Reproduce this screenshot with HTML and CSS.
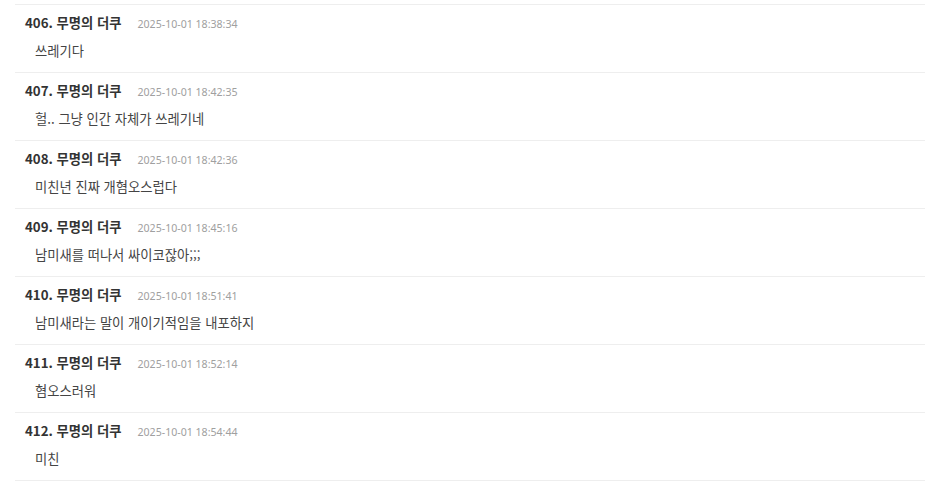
FILE: index.html
```html
<!DOCTYPE html>
<html lang="ko">

<head>
  <meta charset="UTF-8">
  <meta name="viewport" content="width=device-width, initial-scale=1.0">
  <title>댓글</title>
  <link rel="stylesheet" href="styles.css">
</head>

<body>
  <ul class="cmt-list">
    <li class="cmt-item">
      <div class="cmt-head"><span class="cmt-name">406. 무명의 더쿠</span><span class="cmt-date">2025-10-01 18:38:34</span></div>
      <p class="cmt-text">쓰레기다</p>
    </li>
    <li class="cmt-item">
      <div class="cmt-head"><span class="cmt-name">407. 무명의 더쿠</span><span class="cmt-date">2025-10-01 18:42:35</span></div>
      <p class="cmt-text">헐.. 그냥 인간 자체가 쓰레기네</p>
    </li>
    <li class="cmt-item">
      <div class="cmt-head"><span class="cmt-name">408. 무명의 더쿠</span><span class="cmt-date">2025-10-01 18:42:36</span></div>
      <p class="cmt-text">미친년 진짜 개혐오스럽다</p>
    </li>
    <li class="cmt-item">
      <div class="cmt-head"><span class="cmt-name">409. 무명의 더쿠</span><span class="cmt-date">2025-10-01 18:45:16</span></div>
      <p class="cmt-text">남미새를 떠나서 싸이코잖아;;;</p>
    </li>
    <li class="cmt-item">
      <div class="cmt-head"><span class="cmt-name">410. 무명의 더쿠</span><span class="cmt-date">2025-10-01 18:51:41</span></div>
      <p class="cmt-text">남미새라는 말이 개이기적임을 내포하지</p>
    </li>
    <li class="cmt-item">
      <div class="cmt-head"><span class="cmt-name">411. 무명의 더쿠</span><span class="cmt-date">2025-10-01 18:52:14</span></div>
      <p class="cmt-text">혐오스러워</p>
    </li>
    <li class="cmt-item">
      <div class="cmt-head"><span class="cmt-name">412. 무명의 더쿠</span><span class="cmt-date">2025-10-01 18:54:44</span></div>
      <p class="cmt-text">미친</p>
    </li>
  </ul>
</body>

</html>
```

FILE: styles.css
```css
ul,
li,
p,
div,
span {
  padding: 0px;
  margin: 0px;
}

body {
  margin: 0;
  background: #fff;
  font-family: "Noto Sans CJK KR", "Noto Sans", sans-serif;
}

.cmt-list {
  list-style: none;
  padding: 4px 0 0 15px;
}

.cmt-item {
  border-top: 1px solid #eee;
  padding: 7px 10px 11px;
}

.cmt-item:last-child {
  border-bottom: 1px solid #eee;
}

.cmt-head {
  height: 18px;
  line-height: 18px;
}

.cmt-name {
  font-size: 13.3px;
  font-weight: bold;
  color: #333;
}

.cmt-date {
  margin-left: 16px;
  font-family: "Noto Sans", "Noto Sans CJK KR", sans-serif;
  font-size: 10.6px;
  color: #a0a0a0;
}

.cmt-text {
  margin: 11px 0 0 10px;
  height: 20px;
  line-height: 20px;
  font-size: 13.3px;
  color: #444;
}
```
